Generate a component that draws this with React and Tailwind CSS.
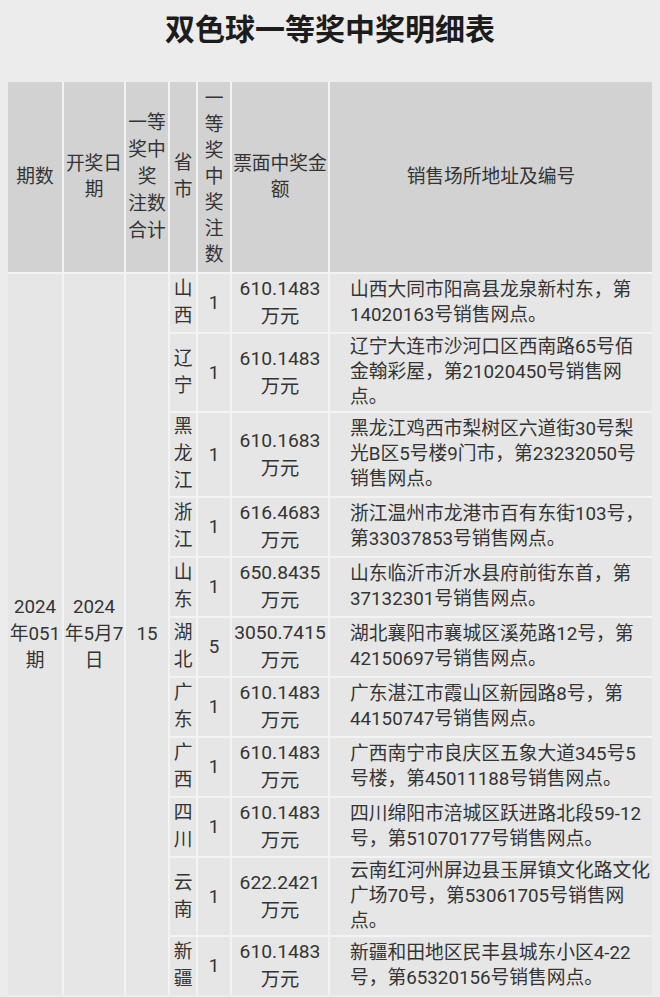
const rows = [
  { province: '山西', count: 1, amount: '610.1483', address: '山西大同市阳高县龙泉新村东，第14020163号销售网点。' },
  { province: '辽宁', count: 1, amount: '610.1483', address: '辽宁大连市沙河口区西南路65号佰金翰彩屋，第21020450号销售网点。' },
  { province: '黑龙江', count: 1, amount: '610.1683', address: '黑龙江鸡西市梨树区六道街30号梨光B区5号楼9门市，第23232050号销售网点。' },
  { province: '浙江', count: 1, amount: '616.4683', address: '浙江温州市龙港市百有东街103号，第33037853号销售网点。' },
  { province: '山东', count: 1, amount: '650.8435', address: '山东临沂市沂水县府前街东首，第37132301号销售网点。' },
  { province: '湖北', count: 5, amount: '3050.7415', address: '湖北襄阳市襄城区溪苑路12号，第42150697号销售网点。' },
  { province: '广东', count: 1, amount: '610.1483', address: '广东湛江市霞山区新园路8号，第44150747号销售网点。' },
  { province: '广西', count: 1, amount: '610.1483', address: '广西南宁市良庆区五象大道345号5号楼，第45011188号销售网点。' },
  { province: '四川', count: 1, amount: '610.1483', address: '四川绵阳市涪城区跃进路北段59-12号，第51070177号销售网点。' },
  { province: '云南', count: 1, amount: '622.2421', address: '云南红河州屏边县玉屏镇文化路文化广场70号，第53061705号销售网点。' },
  { province: '新疆', count: 1, amount: '610.1483', address: '新疆和田地区民丰县城东小区4-22号，第65320156号销售网点。' },
]

const head = 'flex flex-col items-center justify-center bg-[#d2d2d2] py-[4px] text-center leading-[26px]'
const body = 'flex flex-col items-center justify-center bg-[#e6e6e6] py-[1px] text-center'

function Lines({ items }) {
  return items.map((line, i) => (
    <span key={i} className="block">
      {line}
    </span>
  ))
}

export default function App() {
  return (
    <div className="min-h-[997px] bg-[#ececec] px-2 pt-[10px] font-['Roboto','Noto_Sans_CJK_SC',sans-serif] text-[#343434]">
      <h1 className="text-center text-[30px] font-bold leading-[40px] text-[#1c1c1c]">双色球一等奖中奖明细表</h1>

      <div className="mt-[32px] grid grid-cols-[54px_60px_42px_26px_32px_96px_322px] gap-[2px] bg-[#f3f3f3] text-[18.75px]">
        <div className={head}>期数</div>
        <div className={head}>
          <Lines items={['开奖日', '期']} />
        </div>
        <div className={head + ' leading-[27px]'}>
          <Lines items={['一等', '奖中', '奖', '注数', '合计']} />
        </div>
        <div className={head + ' leading-[27px]'}>
          <Lines items={['省', '市']} />
        </div>
        <div className={head + ' bg-[#cfcfcf]'}>
          <Lines items={['一', '等', '奖', '中', '奖', '注', '数']} />
        </div>
        <div className={head}>
          <Lines items={['票面中奖金', '额']} />
        </div>
        <div className={head}>销售场所地址及编号</div>

        <div className={body + ' row-span-11 leading-[27px]'}>
          <Lines items={['2024', '年051', '期']} />
        </div>
        <div className={body + ' row-span-11 leading-[27px]'}>
          <Lines items={['2024', '年5月7', '日']} />
        </div>
        <div className={body + ' row-span-11 leading-[27px]'}>15</div>

        {rows.map((row) => (
          <div key={row.province} className="contents">
            <div className={body + ' leading-[27px]'}>
              <Lines items={row.province.split('')} />
            </div>
            <div className={body + ' leading-[28px]'}>{row.count}</div>
            <div className={body + ' text-[19.25px] leading-[28px]'}>
              <Lines items={[row.amount, '万元']} />
            </div>
            <div className="flex items-center bg-[#e6e6e6] py-[1px] pl-[20px] pr-[1px] text-left leading-[25px]">
              <p>{row.address}</p>
            </div>
          </div>
        ))}
      </div>
    </div>
  )
}
